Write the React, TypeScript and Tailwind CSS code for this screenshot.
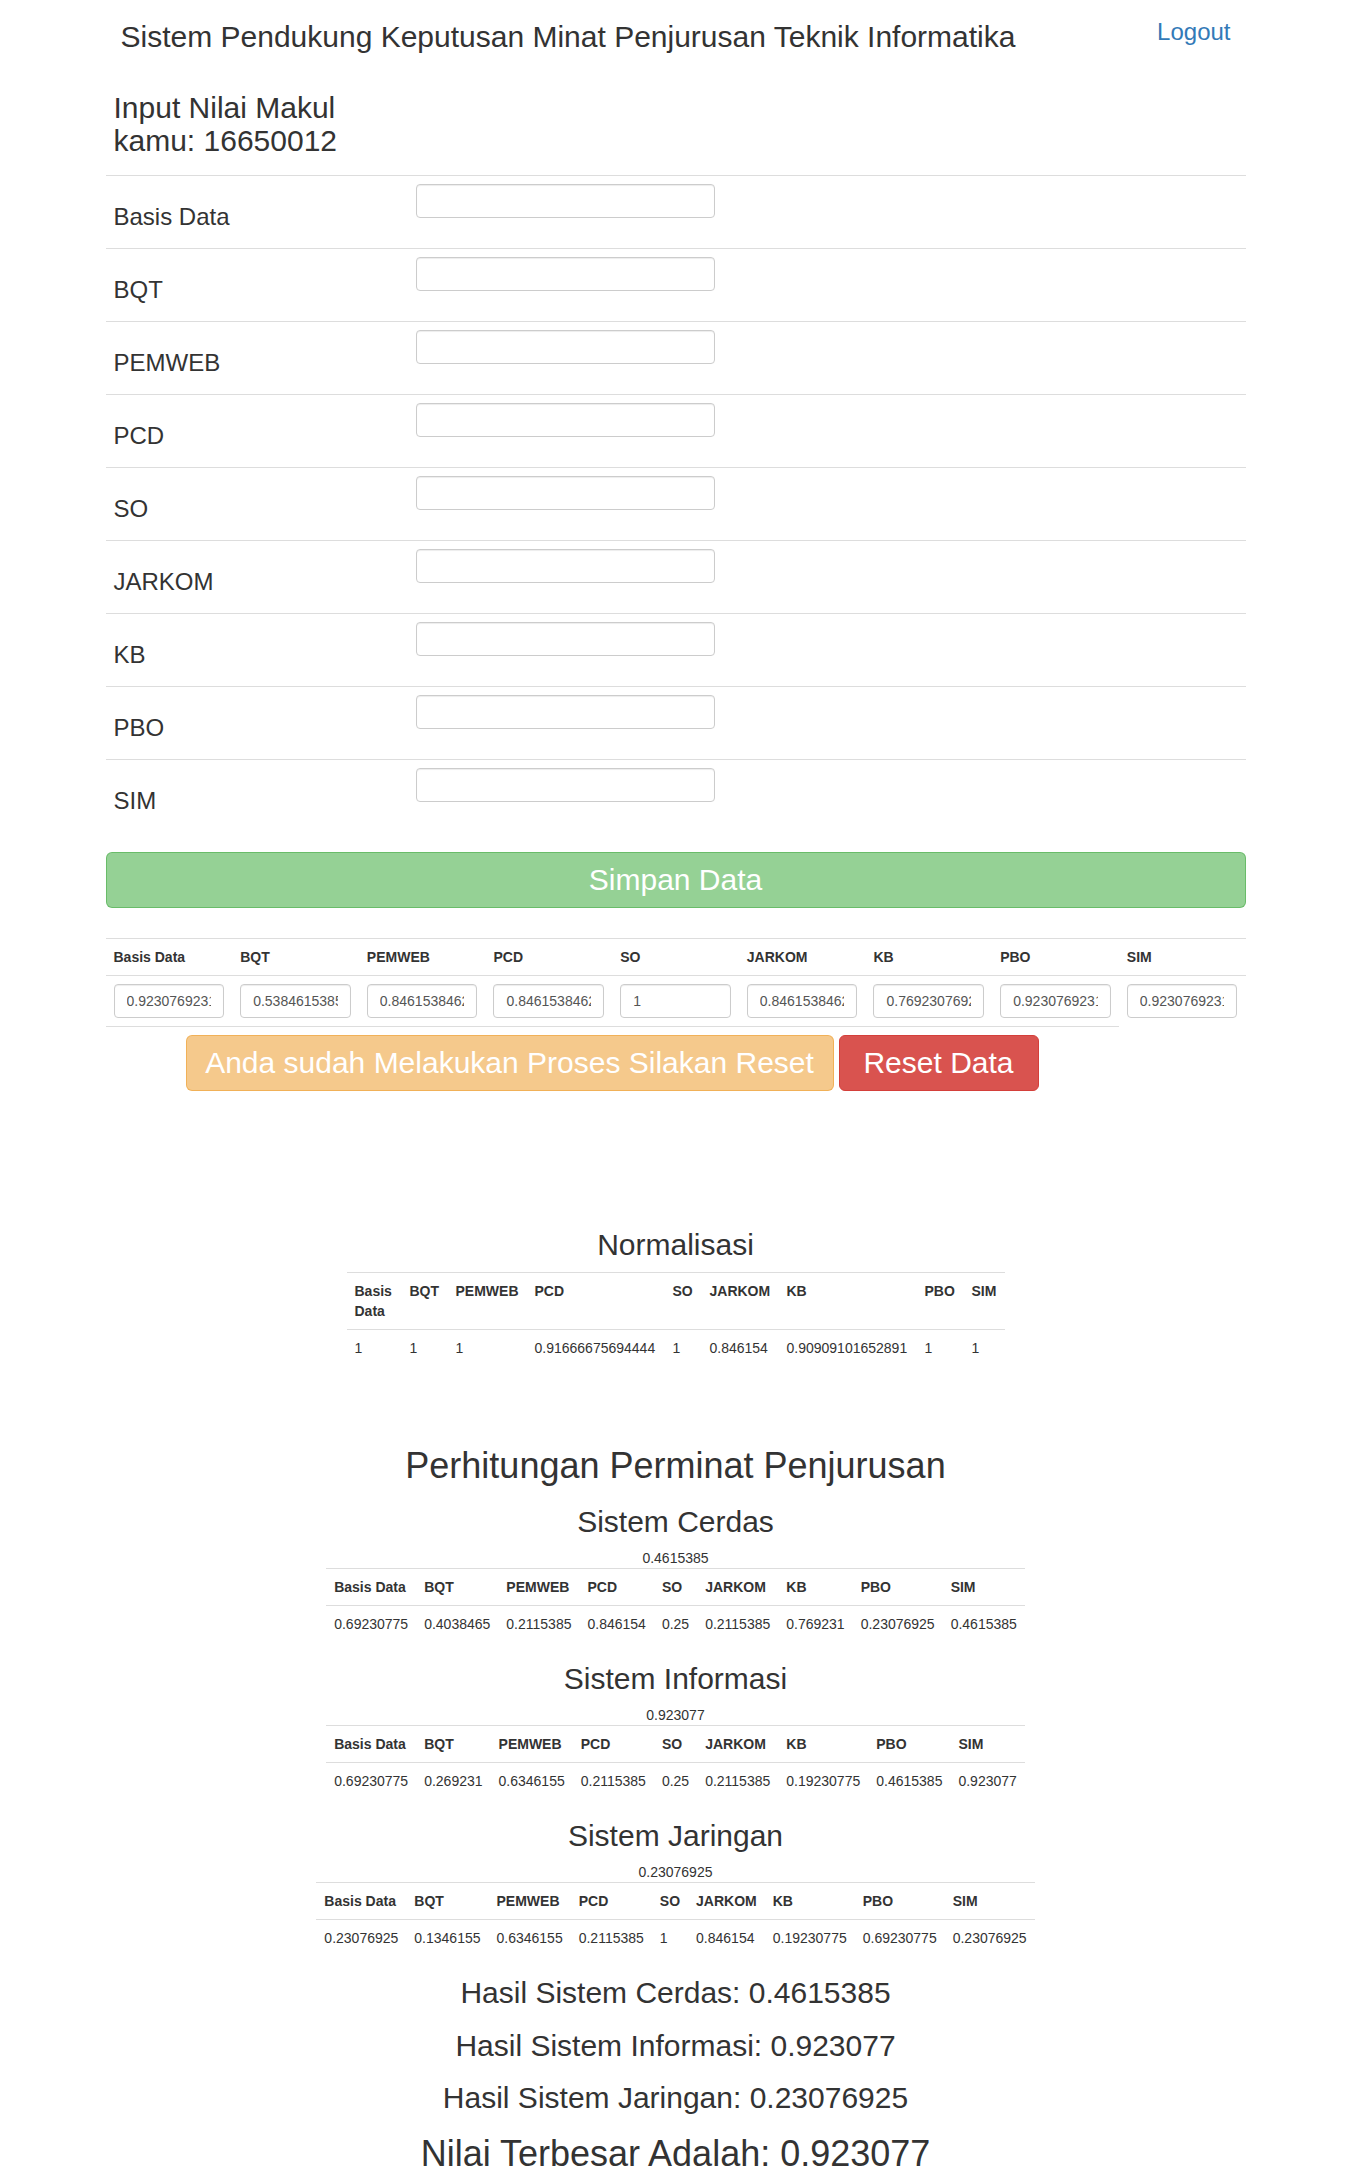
import React from "react";

const subjects = ["Basis Data", "BQT", "PEMWEB", "PCD", "SO", "JARKOM", "KB", "PBO", "SIM"];

// values already stored for this student
const saved = [
  "0.9230769231",
  "0.5384615385",
  "0.8461538462",
  "0.8461538462",
  "1",
  "0.8461538462",
  "0.7692307692",
  "0.9230769231",
  "0.9230769231",
];

const normalisasi = ["1", "1", "1", "0.91666675694444", "1", "0.846154", "0.90909101652891", "1", "1"];
const normWidths = ["w-[55px]", "w-[46px]", "w-[79px]", "w-[138px]", "w-[37px]", "w-[77px]", "w-[138px]", "w-[47px]", "w-[41px]"];

const jurusan = [
  {
    name: "Sistem Cerdas",
    total: "0.4615385",
    values: ["0.69230775", "0.4038465", "0.2115385", "0.846154", "0.25", "0.2115385", "0.769231", "0.23076925", "0.4615385"],
  },
  {
    name: "Sistem Informasi",
    total: "0.923077",
    values: ["0.69230775", "0.269231", "0.6346155", "0.2115385", "0.25", "0.2115385", "0.19230775", "0.4615385", "0.923077"],
  },
  {
    name: "Sistem Jaringan",
    total: "0.23076925",
    values: ["0.23076925", "0.1346155", "0.6346155", "0.2115385", "1", "0.846154", "0.19230775", "0.69230775", "0.23076925"],
  },
];

const HasilTable: React.FC<{ values: string[] }> = ({ values }) => (
  <table className="table-auto text-[14px] leading-5">
    <thead>
      <tr>
        {subjects.map((s) => (
          <th key={s} className="border-t border-[#ddd] p-2 text-left font-bold whitespace-nowrap">
            {s}
          </th>
        ))}
      </tr>
    </thead>
    <tbody>
      <tr>
        {values.map((v, i) => (
          <td key={i} className="border-t border-[#ddd] p-2 text-left whitespace-nowrap">
            {v}
          </td>
        ))}
      </tr>
    </tbody>
  </table>
);

export default function App() {
  return (
    <div className="min-h-[2184px] bg-white text-[#333] font-['Liberation_Sans',Arial,sans-serif]">
      <div className="w-[1170px] mx-auto px-[15px]">
        {/* Header */}
        <div className="flex justify-between items-start">
          <h2 className="mt-[20px] mb-[10px] pl-[15px] text-[30px] leading-[33px]">
            Sistem Pendukung Keputusan Minat Penjurusan Teknik Informatika
          </h2>
          <a href="#" className="mt-[19px] pr-[15px] text-[24px] leading-[26px] text-[#337ab7]">
            Logout
          </a>
        </div>

        {/* Form input nilai */}
        <div className="px-2 pt-[28px] pb-[18px]">
          <h2 className="w-[286px] text-[30px] leading-[33px]">Input Nilai Makul kamu: 16650012</h2>
        </div>
        {subjects.map((s) => (
          <div key={s} className="grid grid-cols-[302px_1fr] h-[73px] border-t border-[#ddd]">
            <div className="px-2 pt-[28px] text-[24px] leading-[26px]">{s}</div>
            <div className="pl-2 pt-2">
              <input
                type="text"
                className="w-[299px] h-[34px] border border-[#ccc] rounded-[4px] shadow-[inset_0_1px_1px_rgba(0,0,0,0.075)] px-3 text-[14px]"
              />
            </div>
          </div>
        ))}

        <button
          disabled
          className="mt-[20px] w-full h-[56px] rounded-[6px] border border-[#4cae4c]/60 bg-[#95d195] text-white text-[30px] leading-[34px]"
        >
          Simpan Data
        </button>

        {/* Nilai tersimpan */}
        <div className="mt-[30px] grid grid-cols-9 border-t border-[#ddd]">
          {subjects.map((s) => (
            <div key={s} className="p-2 text-[14px] leading-5 font-bold">
              {s}
            </div>
          ))}
        </div>
        <div className="grid grid-cols-9 border-t border-[#ddd]">
          {saved.map((v, i) => (
            <div key={i} className="p-2">
              <input
                readOnly
                value={v}
                className="w-full h-[34px] border border-[#ccc] rounded-[4px] shadow-[inset_0_1px_1px_rgba(0,0,0,0.075)] px-3 text-[14px] text-[#555]"
              />
            </div>
          ))}
        </div>
        <div className="w-[1013px] border-t border-[#ddd] pt-2 flex justify-center gap-[5px]">
          <button
            disabled
            className="w-[648px] h-[56px] rounded-[6px] border border-[#eea236]/60 bg-[#f5c98c] text-white text-[30px] leading-[34px] whitespace-nowrap"
          >
            Anda sudah Melakukan Proses Silakan Reset
          </button>
          <button className="w-[200px] h-[56px] rounded-[6px] border border-[#d43f3a] bg-[#d9534f] text-white text-[30px] leading-[34px]">
            Reset Data
          </button>
        </div>

        {/* Normalisasi */}
        <div className="flex flex-col items-center">
          <h2 className="mt-[137px] text-[30px] leading-[33px]">Normalisasi</h2>
          <table className="mt-[11px] table-fixed w-[658px] text-[14px] leading-5">
            <thead>
              <tr>
                {subjects.map((s, i) => (
                  <th key={s} className={`${normWidths[i]} border-t border-[#ddd] p-2 text-left align-top font-bold`}>
                    {s}
                  </th>
                ))}
              </tr>
            </thead>
            <tbody>
              <tr>
                {normalisasi.map((v, i) => (
                  <td key={i} className="border-t border-[#ddd] p-2 text-left whitespace-nowrap">
                    {v}
                  </td>
                ))}
              </tr>
            </tbody>
          </table>

          {/* Perhitungan */}
          <h1 className="mt-[80px] text-[36px] leading-[40px]">Perhitungan Perminat Penjurusan</h1>
          {jurusan.map((j, idx) => (
            <React.Fragment key={j.name}>
              <h2 className={`${idx === 0 ? "mt-[19px]" : "mt-[20px]"} text-[30px] leading-[33px]`}>{j.name}</h2>
              <p className="mt-[10px] text-[14px] leading-5">{j.total}</p>
              <HasilTable values={j.values} />
            </React.Fragment>
          ))}

          <h2 className="mt-[20px] text-[30px] leading-[33px]">Hasil Sistem Cerdas: 0.4615385</h2>
          <h2 className="mt-[19.5px] text-[30px] leading-[33px]">Hasil Sistem Informasi: 0.923077</h2>
          <h2 className="mt-[19.5px] text-[30px] leading-[33px]">Hasil Sistem Jaringan: 0.23076925</h2>
          <h1 className="mt-[20px] mb-[10px] text-[36px] leading-[40px]">Nilai Terbesar Adalah: 0.923077</h1>
        </div>
      </div>
    </div>
  );
}
